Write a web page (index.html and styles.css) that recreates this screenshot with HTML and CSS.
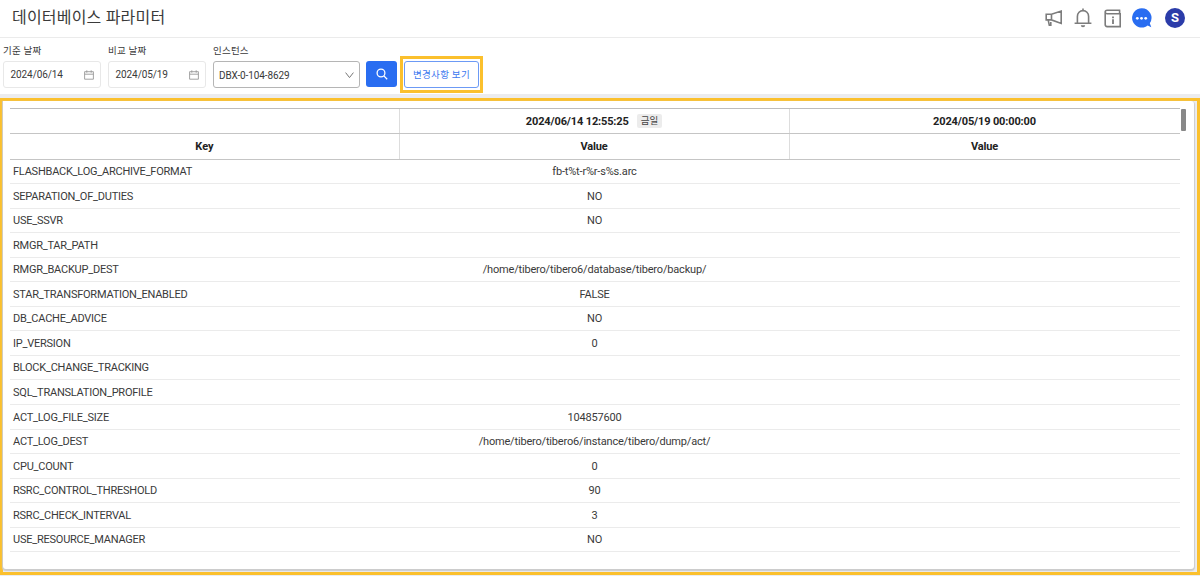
FILE: index.html
```html
<!DOCTYPE html>
<html lang="ko">
<head>
<meta charset="utf-8">
<title>데이터베이스 파라미터</title>
<link rel="stylesheet" href="styles.css">
</head>
<body>
<header class="topbar">
  <h1 class="title">데이터베이스 파라미터</h1>
  <nav class="actions">
    <svg class="icon-horn" width="18" height="18" viewBox="0 0 18 18" fill="none" stroke="#7c7c7c" stroke-width="1.6"><path d="M1.2 5.2h5.3L16.2 2v12.4L6.5 10.9H1.2zM6.5 5.2v5.7M3.2 11.1l1.1 5h1.5v-3"/></svg>
    <svg class="icon-bell" width="18" height="20" viewBox="0 0 18 20" fill="none" stroke="#7c7c7c" stroke-width="1.6"><path d="M.6 15.2h16.8M3.4 15V8.4a5.6 5.8 0 0 1 11.2 0V15M9 2.7V.6"/><path d="M6.8 17.3h4.4a2.2 2 0 0 1-4.4 0z" fill="#7c7c7c" stroke="none"/></svg>
    <svg class="icon-info" width="18" height="19" viewBox="0 0 18 19" fill="none" stroke="#7c7c7c" stroke-width="1.6"><path d="M16.3 1.3H3.2C.5 1.3.5 4.8 3.2 4.8h13v12.8H3.2a2 2 0 0 1-2-2V3M15.6 1.2v3.6"/><path d="M8.1 7.5h1.8v1.7H8.1zM8.1 10.2h1.8V15H8.1z" fill="#7c7c7c" stroke="none"/></svg>
    <svg class="icon-chat" width="20" height="20" viewBox="0 0 20 20"><path d="M9.8.2a9.7 9.7 0 1 0 5.9 17.4l3.6 1.7-1.5-4A9.7 9.7 0 0 0 9.8.2z" fill="#296df1"/><g fill="#fff"><circle cx="5.3" cy="10.3" r="1.4"/><circle cx="9.5" cy="10.3" r="1.4"/><circle cx="13.7" cy="10.3" r="1.4"/></g></svg>
    <span class="avatar">S</span>
  </nav>
</header>
<section class="filters">
  <div class="field">
    <span class="label">기준 날짜</span>
    <div class="input date">2024/06/14<svg width="10" height="10" viewBox="0 0 10 10" fill="none" stroke="#999" stroke-width=".9"><path d="M.6 1.7h8.8v7.5H.6zM.6 4.2h8.8M2.8.3v2.4M7.2.3v2.4"/></svg></div>
  </div>
  <div class="field">
    <span class="label">비교 날짜</span>
    <div class="input date">2024/05/19<svg width="10" height="10" viewBox="0 0 10 10" fill="none" stroke="#999" stroke-width=".9"><path d="M.6 1.7h8.8v7.5H.6zM.6 4.2h8.8M2.8.3v2.4M7.2.3v2.4"/></svg></div>
  </div>
  <div class="field instance">
    <span class="label">인스턴스</span>
    <div class="input select">DBX-0-104-8629<svg width="9" height="7" viewBox="0 0 9 7" fill="none" stroke="#777" stroke-width="1"><path d="M.6.6l3.9 5L8.4.6"/></svg></div>
  </div>
  <button class="search" aria-label="검색"><svg width="12" height="12" viewBox="0 0 12 12" fill="none" stroke="#fff" stroke-width="1.3"><circle cx="5" cy="5" r="3.9"/><path d="M7.9 7.9l3.3 3.3"/></svg></button>
  <div class="highlight"><button class="changes">변경사항 보기</button></div>
</section>
<main class="frame">
  <div class="card">
    <div class="table">
      <div class="row head"><span></span><span>2024/06/14 12:55:25<em class="today">금일</em></span><span>2024/05/19 00:00:00</span></div>
      <div class="row head"><span>Key</span><span>Value</span><span>Value</span></div>
      <div class="row"><span>FLASHBACK_LOG_ARCHIVE_FORMAT</span><span>fb-t%t-r%r-s%s.arc</span></div>
      <div class="row"><span>SEPARATION_OF_DUTIES</span><span>NO</span></div>
      <div class="row"><span>USE_SSVR</span><span>NO</span></div>
      <div class="row"><span>RMGR_TAR_PATH</span></div>
      <div class="row"><span>RMGR_BACKUP_DEST</span><span>/home/tibero/tibero6/database/tibero/backup/</span></div>
      <div class="row"><span>STAR_TRANSFORMATION_ENABLED</span><span>FALSE</span></div>
      <div class="row"><span>DB_CACHE_ADVICE</span><span>NO</span></div>
      <div class="row"><span>IP_VERSION</span><span>0</span></div>
      <div class="row"><span>BLOCK_CHANGE_TRACKING</span></div>
      <div class="row"><span>SQL_TRANSLATION_PROFILE</span></div>
      <div class="row"><span>ACT_LOG_FILE_SIZE</span><span>104857600</span></div>
      <div class="row"><span>ACT_LOG_DEST</span><span>/home/tibero/tibero6/instance/tibero/dump/act/</span></div>
      <div class="row"><span>CPU_COUNT</span><span>0</span></div>
      <div class="row"><span>RSRC_CONTROL_THRESHOLD</span><span>90</span></div>
      <div class="row"><span>RSRC_CHECK_INTERVAL</span><span>3</span></div>
      <div class="row"><span>USE_RESOURCE_MANAGER</span><span>NO</span></div>
    </div>
    <div class="scrollbar"></div>
  </div>
</main>
</body>
</html>
```
FILE: styles.css
```css
* { box-sizing: border-box; }
body {
  margin: 0;
  height: 576px;
  overflow: hidden;
  background: #ececee;
  color: #3a3a3a;
  font-family: Roboto, "Noto Sans CJK KR", sans-serif;
  font-size: 11px;
}
button { font: inherit; padding: 0; margin: 0; }
.topbar {
  height: 38px;
  background: #fff;
  border-bottom: 1px solid #ebebeb;
  display: flex;
  justify-content: space-between;
  padding: 0 15px 0 12px;
}
.title { margin: 0; font-size: 16px; font-weight: 400; line-height: 35px; letter-spacing: .2px; white-space: nowrap; }
.actions { display: flex; align-items: center; height: 36px; }
.icon-horn { margin-right: 11px; }
.icon-bell { margin-right: 12px; }
.icon-info { margin-right: 10px; }
.icon-chat { margin-right: 13px; }
.avatar {
  width: 20px; height: 20px; border-radius: 50%;
  background: #2b3ca9; color: #fff;
  font-size: 13px; font-weight: 700; line-height: 20px; text-align: center;
}
.filters {
  height: 56px;
  background: #fff;
  display: flex;
  align-items: flex-start;
  padding: 5px 0 0 3px;
}
.field { width: 98px; margin-right: 7px; }
.field.instance { width: 147px; margin-right: 6.4px; }
.label { display: block; height: 18px; line-height: 16px; font-size: 9.5px; letter-spacing: .2px; white-space: nowrap; }
.input {
  height: 27px;
  border: 1px solid #e8e8e8;
  border-radius: 3px;
  padding: 0 6px;
  display: flex;
  align-items: center;
  justify-content: space-between;
  font-size: 10px;
}
.date { letter-spacing: -.08px; padding-left: 6.5px; }
.select { border-color: #b5b5b5; padding: 1px 5px 0; letter-spacing: -.12px; }
.search {
  width: 31px; height: 26px; margin: 18px 2.6px 0 0;
  border: 0; border-radius: 3px; background: #296df1;
  display: flex; align-items: center; justify-content: center;
}
.highlight { width: 83px; height: 37px; margin-top: 13px; border: 3px solid #fbc02d; padding: 2px 1px; }
.changes {
  width: 75px; height: 27px; padding-bottom: 2px;
  border: 1px solid #6c9af5; border-radius: 3px;
  background: #fff; color: #3c78ef; font-size: 9.5px; letter-spacing: .3px; white-space: nowrap;
}
.frame {
  margin-top: 4px;
  height: 477px;
  border: 3px solid #fbc02d;
  padding-right: 3px;
}
.card {
  height: 468px;
  background: #fff;
  border-radius: 0 3px 3px 3px;
  box-shadow: 0 1px 1px 1px #ccc;
  display: flex;
  padding: 7px 0 0 7px;
}
.table { width: 1170px; border-top: 1px solid #bdbdbd; letter-spacing: -.18px; }
.row {
  display: grid;
  grid-template-columns: repeat(3, 390px);
  height: 24.55px;
  border-bottom: 1px solid #ebebeb;
}
.row span { display: flex; align-items: center; justify-content: center; padding: .6px 1px 0 0; }
.row span:first-child { justify-content: flex-start; padding-left: 3px; letter-spacing: -.23px; }
.row.head { height: 25px; border-color: #c5c5c5; font-weight: 700; color: #222; letter-spacing: -.14px; }
.row.head + .head { height: 25.5px; }
.head span:first-child { justify-content: center; padding: 0; letter-spacing: 0; }
.head span:not(:last-child) { border-right: 1px solid #ddd; }
.today {
  margin-left: 8px; padding: 0 4px; height: 14px; line-height: 14px;
  border-radius: 2px; background: #ececec; color: #444;
  font-size: 9.5px; font-style: normal; font-weight: 400; letter-spacing: 0;
}
.scrollbar { width: 5px; height: 22px; margin: 1px 0 0 1px; border-radius: 1px; background: #888; }
```
